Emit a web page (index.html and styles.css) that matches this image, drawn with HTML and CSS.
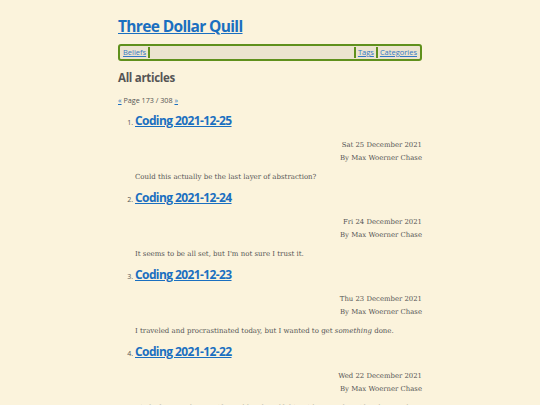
FILE: index.html
```html
<!DOCTYPE html>
<html>
<head>
<meta charset="utf-8">
<link rel="stylesheet" href="styles.css">
</head>
<body>
<div class="page">
  <header class="site-header">
    <a class="site-title" href="#">Three Dollar Quill</a>
  </header>
  <nav class="nav">
    <a href="#">Beliefs</a>
    <span class="sep"></span>
    <span class="fill"></span>
    <span class="sep"></span>
    <a href="#">Tags</a>
    <span class="sep"></span>
    <a href="#">Categories</a>
  </nav>
  <h2 class="section-title">All articles</h2>
  <p class="pager"><a href="#">«</a> Page 173 / 308 <a href="#">»</a></p>
  <ol class="articles">
    <li class="article">
      <h3 class="article-title"><a href="#">Coding 2021-12-25</a></h3>
      <div class="meta"><div>Sat 25 December 2021</div><div>By Max Woerner Chase</div></div>
      <p class="summary">Could this actually be the last layer of abstraction?</p>
    </li>
    <li class="article">
      <h3 class="article-title"><a href="#">Coding 2021-12-24</a></h3>
      <div class="meta"><div>Fri 24 December 2021</div><div>By Max Woerner Chase</div></div>
      <p class="summary">It seems to be all set, but I'm not sure I trust it.</p>
    </li>
    <li class="article">
      <h3 class="article-title"><a href="#">Coding 2021-12-23</a></h3>
      <div class="meta"><div>Thu 23 December 2021</div><div>By Max Woerner Chase</div></div>
      <p class="summary">I traveled and procrastinated today, but I wanted to get <em>something</em> done.</p>
    </li>
    <li class="article">
      <h3 class="article-title"><a href="#">Coding 2021-12-22</a></h3>
      <div class="meta"><div>Wed 22 December 2021</div><div>By Max Woerner Chase</div></div>
      <p class="summary">Kind of tempted to see if I could code golf this with HKTs, but I'd rather work on something else for a bit.</p>
    </li>
  </ol>
</div>
</body>
</html>
```
FILE: styles.css
```css
html, body {
  margin: 0;
  padding: 0;
  background: #fbf3dc;
}
body {
  font-family: "DejaVu Serif", serif;
  color: #555;
  font-size: 7px;
}
.page {
  width: 304px;
  margin: 0 auto;
  padding-top: 14px;
}
a { color: #1a6fc0; }
.site-header {
  height: 30px;
}
.site-title {
  font-family: "Open Sans", sans-serif;
  font-weight: 700;
  font-size: 15.5px;
  line-height: 24px;
  letter-spacing: -0.65px;
}
.nav {
  display: flex;
  align-items: stretch;
  height: 11px;
  border: 2px solid #5f901c;
  border-radius: 3px;
  background: #ece4cf;
  font-family: "Open Sans", sans-serif;
  font-size: 7.5px;
  line-height: 11px;
  padding: 1px 1px;
}
.nav a {
  padding: 0 2px;
  color: #3478c4;
}
.nav .sep {
  width: 2px;
  background: #5f901c;
}
.nav .fill { flex: 1; }
.section-title {
  font-family: "Open Sans", sans-serif;
  font-weight: 700;
  font-size: 11.5px;
  letter-spacing: -0.3px;
  color: #555;
  margin: 8px 0 0;
  line-height: 17px;
}
.pager {
  font-family: "Open Sans", sans-serif;
  font-size: 7.2px;
  margin: 8px 0 0;
  line-height: 12px;
}
.articles {
  margin: 6px 0 0;
  padding-left: 17px;
  font-size: 7px;
}
.article::marker {
  font-family: "Open Sans", sans-serif;
  font-size: 7px;
}
.article-title {
  font-family: "Open Sans", sans-serif;
  font-weight: 700;
  font-size: 12px;
  letter-spacing: -0.6px;
  line-height: 18px;
  margin: 0;
}
.meta {
  text-align: right;
  margin-top: 9px;
  font-size: 6.9px;
  line-height: 12.5px;
}
.summary {
  margin: 7px 0 6px;
  font-size: 7px;
  line-height: 12px;
}
```
